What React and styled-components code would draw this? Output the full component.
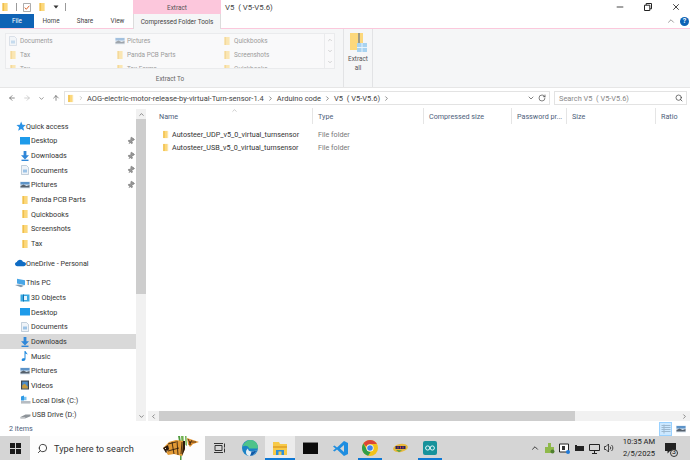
import React from 'react'
import styled, { createGlobalStyle } from 'styled-components'
import { ChevronDown, ChevronUp, ChevronLeft, ChevronRight, ArrowLeft, ArrowRight, ArrowUp, RotateCw, Search, Minus, X, Pin } from 'lucide-react'

const Global = createGlobalStyle`
  html, body { margin: 0; padding: 0; width: 690px; height: 460px; overflow: hidden; background: #fff; }
  body { font-family: Roboto, "Open Sans", sans-serif; font-size: 7.2px; color: #333; }
  * { box-sizing: border-box; }
`

const Page = styled.div`
  width: 690px;
  height: 460px;
  display: flex;
  flex-direction: column;
  overflow: hidden;
`

/* title bar */
const TitleBar = styled.div`
  height: 14px;
  display: flex;
  align-items: center;
`
const QuickTools = styled.div`
  width: 133px;
  display: flex;
  align-items: center;
  gap: 6px;
  padding-left: 0;
`
const Sep = styled.span`
  width: 1px;
  height: 8px;
  background: #9a9a9a;
`
const ExtractTab = styled.div`
  width: 88px;
  height: 14px;
  background: #fcc7dc;
  color: #555;
  font-size: 6.4px;
  display: flex;
  align-items: center;
  justify-content: center;
  padding-top: 1px;
`
const WindowTitle = styled.div`
  flex: 1;
  padding-left: 4px;
  padding-top: 1px;
  font-size: 7.8px;
  color: #444;
  white-space: pre;
`
const WinControls = styled.div`
  display: flex;
  align-items: center;
  gap: 19px;
  padding-right: 9px;
  color: #222;
`

/* tabs */
const TabRow = styled.div`
  height: 15px;
  display: flex;
  align-items: flex-start;
  border-bottom: 1px solid #fbc8dc;
  font-size: 6.4px;
`
const FileTab = styled.div`
  width: 34px;
  height: 14px;
  background: #0f63b5;
  color: #fff;
  display: flex;
  align-items: center;
  justify-content: center;
`
const Tab = styled.div`
  height: 14px;
  width: ${p => p.$w}px;
  display: flex;
  align-items: center;
  justify-content: center;
  color: #444;
  white-space: nowrap;
`
const ActiveTab = styled(Tab)`
  height: 15px;
  background: #f5f6f7;
  border: 1px solid #dcdcdc;
  border-top: none;
  border-bottom: none;
`
const TabSpacer = styled.div`
  flex: 1;
`
const HelpArea = styled.div`
  display: flex;
  align-items: center;
  gap: 4px;
  padding-right: 1px;
  height: 14px;
`
const HelpDot = styled.span`
  width: 9px;
  height: 9px;
  border-radius: 50%;
  background: #0f63b5;
  color: #fff;
  font-size: 7px;
  font-weight: 700;
  display: flex;
  align-items: center;
  justify-content: center;
`

/* ribbon */
const Ribbon = styled.div`
  height: 59px;
  background: #f5f6f7;
  border-bottom: 1px solid #e6e6e6;
  display: flex;
  font-size: 6.4px;
`
const ExtractGroup = styled.div`
  width: 344px;
  border-right: 1px solid #e2e3e5;
  padding: 4px 0 0 5px;
  display: flex;
  flex-direction: column;
`
const GalleryWrap = styled.div`
  width: 330px;
  height: 36px;
  display: flex;
`
const Gallery = styled.div`
  width: 320px;
  height: 36px;
  background: #f9f9fa;
  border: 1px solid #eaebed;
  overflow: hidden;
  display: grid;
  grid-template-columns: 107px 107px 1fr;
  grid-auto-rows: 14px;
  padding: 0 0 0 2px;
`
const GalleryItem = styled.div`
  display: flex;
  align-items: center;
  gap: 2px;
  color: #9b9b9b;
  svg { opacity: 0.55; }
`
const GalleryScroll = styled.div`
  width: 10px;
  background: #f9f9fa;
  border: 1px solid #eaebed;
  border-left: none;
  display: flex;
  flex-direction: column;
  align-items: center;
  justify-content: space-between;
  padding: 3px 0;
  color: #aaa;
`
const GroupLabel = styled.div`
  text-align: center;
  color: #666;
  margin-top: 6px;
  width: 330px;
`
const ExtractAll = styled.div`
  width: 29px;
  border-right: 1px solid #e2e3e5;
  padding-top: 4px;
  display: flex;
  flex-direction: column;
  align-items: center;
  line-height: 9px;
  color: #555;
  text-align: center;
  svg { margin-bottom: 3px; }
`

/* address bar */
const AddressRow = styled.div`
  height: 19px;
  display: flex;
  align-items: flex-start;
  padding: 3px 3px 0 0;
`
const NavButtons = styled.div`
  width: 64px;
  height: 14px;
  display: flex;
  align-items: center;
  gap: 7px;
  padding-left: 8px;
  color: #555;
`
const AddressBox = styled.div`
  width: 486px;
  height: 14px;
  border: 1px solid #e3e3e3;
  display: flex;
  align-items: center;
  padding: 0 3px 0 1px;
  color: #444;
  gap: 3px;
  font-size: 7.5px;
`
const Crumb = styled.span`
  white-space: pre;
`
const CrumbSpacer = styled.div`
  flex: 1;
`
const SearchBox = styled.div`
  width: 133px;
  height: 14px;
  margin-left: 4px;
  border: 1px solid #e3e3e3;
  display: flex;
  align-items: center;
  justify-content: space-between;
  padding: 0 3px 0 4px;
  color: #888;
  font-size: 7.4px;
  white-space: pre;
`

/* body */
const Body = styled.div`
  flex: 1;
  min-height: 0;
  display: flex;
`
const Sidebar = styled.div`
  width: 136px;
  padding-top: 12px;
  display: flex;
  flex-direction: column;
  overflow: hidden;
`
const NavRow = styled.div`
  height: 14.67px;
  flex: none;
  display: flex;
  align-items: center;
  gap: ${p => (p.$top ? 0 : 1)}px;
  padding-left: ${p => (p.$top ? 15 : 20)}px;
  padding-right: 1px;
  margin-top: ${p => p.$gap || 0}px;
  background: ${p => (p.$selected ? '#d9d9d9' : 'transparent')};
  color: #333;
  white-space: nowrap;
`
const NavLabel = styled.span`
  flex: 1;
`
const NavPin = styled(Pin)`
  color: #777;
  fill: #999;
  transform: rotate(35deg);
`
const VScroll = styled.div`
  width: 10px;
  margin-top: 2px;
  background: #f1f1f1;
  display: flex;
  flex-direction: column;
  align-items: center;
  color: #444;
`
const VArrow = styled.div`
  height: 10px;
  width: 100%;
  display: flex;
  align-items: center;
  justify-content: center;
`
const VThumb = styled.div`
  width: 100%;
  height: 175px;
  background: #cdcdcd;
`
const VTrack = styled.div`
  flex: 1;
`
const Main = styled.div`
  flex: 1;
  min-width: 0;
  display: flex;
  flex-direction: column;
`
const Columns = styled.div`
  display: grid;
  grid-template-columns: 167px 111px 88px 55px 89px 34px;
  height: 20px;
  padding-top: 1px;
`
const ColHead = styled.div`
  height: 16px;
  padding-left: ${p => (p.$first ? 13 : 5)}px;
  display: flex;
  align-items: center;
  color: #4c607a;
  border-right: ${p => (p.$last ? 'none' : '1px solid #e5e5e5')};
  white-space: nowrap;
  overflow: hidden;
  position: relative;
`
const SortMark = styled(ChevronUp)`
  position: absolute;
  left: 85px;
  top: -1px;
  color: #aaa;
`
const Files = styled.div`
  flex: 1;
  display: flex;
  flex-direction: column;
  padding-top: 1px;
`
const FileRow = styled.div`
  height: 13px;
  display: grid;
  grid-template-columns: 167px 1fr;
  align-items: center;
`
const FileName = styled.div`
  display: flex;
  align-items: center;
  gap: 2px;
  padding-left: 15px;
  color: #333;
  white-space: nowrap;
`
const FileType = styled.div`
  padding-left: 5px;
  color: #777;
`
const HScroll = styled.div`
  height: 10px;
  margin-left: 2px;
  background: #f1f1f1;
  display: flex;
  align-items: center;
  color: #444;
`
const HThumb = styled.div`
  width: 416px;
  height: 10px;
  background: #cdcdcd;
`
const HTrack = styled.div`
  flex: 1;
`
const HArrow = styled.div`
  width: 11px;
  display: flex;
  justify-content: center;
`

/* status */
const StatusBar = styled.div`
  height: 15px;
  display: flex;
  align-items: center;
  justify-content: space-between;
  padding: 0 3px 0 9px;
  color: #4c607a;
`
const ViewButtons = styled.div`
  display: flex;
  align-items: center;
  gap: 2px;
`
const ViewBtn = styled.div`
  width: 13px;
  height: 14px;
  display: flex;
  align-items: center;
  justify-content: center;
  background: ${p => (p.$on ? '#cce8ff' : 'transparent')};
  border: 1px solid ${p => (p.$on ? '#99d1ff' : 'transparent')};
`

/* taskbar */
const Taskbar = styled.div`
  height: 24px;
  background: #d5d5d5;
  display: flex;
  align-items: stretch;
`
const StartBtn = styled.div`
  width: 30px;
  display: flex;
  align-items: center;
  justify-content: center;
`
const SearchField = styled.div`
  width: 175px;
  background: #fdfdfd;
  display: flex;
  align-items: center;
  gap: 6px;
  padding-left: 7px;
  font-size: 9.2px;
  color: #333;
  position: relative;
`
const Butterflies = styled.svg`
  position: absolute;
  left: 133px;
  top: 0;
`
const MirrorSearch = styled(Search)`
  transform: scaleX(-1);
`
const AppSlots = styled.div`
  width: 240px;
  display: flex;
`
const AppSlot = styled.div`
  width: 30px;
  display: flex;
  align-items: center;
  justify-content: center;
  position: relative;
  background: ${p => (p.$active ? '#ebebeb' : 'transparent')};
  &::after {
    content: '';
    position: absolute;
    bottom: 0;
    left: ${p => (p.$active ? 0 : 3)}px;
    right: ${p => (p.$active ? 0 : 3)}px;
    height: 2px;
    background: ${p => (p.$running || p.$active ? '#0f78d4' : 'transparent')};
  }
`
const Tray = styled.div`
  flex: 1;
  display: flex;
  align-items: center;
  justify-content: flex-end;
  gap: 4px;
  padding-right: 7px;
  color: #222;
`
const Clock = styled.div`
  width: 44px;
  text-align: center;
  line-height: 12px;
  color: #222;
  font-size: 7.6px;
  margin-left: -1px;
`
const NoteBtn = styled.div`
  width: 24px;
  margin-left: -6px;
  display: flex;
  justify-content: center;
  align-items: center;
  font-size: 7px;
  position: relative;
`
const NoteCount = styled.span`
  position: absolute;
  left: 11px;
  top: 6px;
  width: 8px;
  height: 8px;
  border-radius: 50%;
  border: 1px solid #333;
  background: #d5d5d5;
  display: flex;
  align-items: center;
  justify-content: center;
  line-height: 1;
`

/* drawn icons */
const FolderIcon = ({ s = 9 }) => (
  <svg width={s} height={s} viewBox="0 0 10 10">
    <path d="M2.500 1h5v8h-5z" fill="#fcd87c" />
    <path d="M2.500 1h1.600v8H2.500z" fill="#f0c04e" />
    <path d="M7 1h1v8H7z" fill="#fbe7ae" />
  </svg>
)
const NavFolder = () => <FolderIcon s={10} />
const DocIcon = ({ s = 10 }) => (
  <svg width={s} height={s} viewBox="0 0 10 10">
    <path d="M1.500 .5h5l2 2v7h-7z" fill="#eef3f8" stroke="#9fb2c6" strokeWidth=".6" />
    <path d="M3 4.500h4v3H3z" fill="#9cc3e6" />
  </svg>
)
const PicIcon = ({ s = 10 }) => (
  <svg width={s} height={s} viewBox="0 0 10 10">
    <path d="M0 1.500h10v7H0z" fill="#dbe7f2" />
    <path d="M.5 2h9v2.500H.5z" fill="#5c93c8" />
    <path d="M.5 6l3-1.500 3 1.500 3-1v2.600h-9z" fill="#55606c" />
  </svg>
)
const DesktopIcon = () => (
  <svg width="10" height="10" viewBox="0 0 10 10">
    <path d="M0 1h10v7.500H0z" fill="#1e9bea" />
  </svg>
)
const DownloadIcon = () => (
  <svg width="10" height="10" viewBox="0 0 10 10">
    <path d="M3.600 0h2.800v4.200H9L5 8.400 1 4.200h2.600z" fill="#2f87d8" />
    <path d="M1.500 8.600h7V10h-7z" fill="#2f87d8" />
  </svg>
)
const StarIcon = () => (
  <svg width="11" height="11" viewBox="0 0 10 10">
    <path d="M5.600.4l1.200 3.100 3 .2-2.300 2 .8 3.200L5.600 7.200 2.900 8.900l.8-3.200-2.400-2 3.100-.2z" fill="#2b93e6" />
  </svg>
)
const CloudIcon = () => (
  <svg width="11" height="10" viewBox="0 0 11 10">
    <path d="M2.400 8.200C.9 8.200 0 7.300 0 6.100c0-1.100.8-1.900 1.900-2C2.300 2.700 3.500 1.800 5 1.800c1.400 0 2.500.8 2.900 2 1.700 0 3.100.9 3.100 2.300 0 1.200-1 2.100-2.400 2.100z" fill="#0f6cc4" />
  </svg>
)
const PcIcon = () => (
  <svg width="11" height="10" viewBox="0 0 11 10">
    <path d="M2 .8l8 1.400v5L2 5.600z" fill="#49a6e6" />
    <path d="M0 7l4-.6 5 1.400-3 1.400z" fill="#7f98ad" />
  </svg>
)
const CubeIcon = () => (
  <svg width="10" height="10" viewBox="0 0 10 10">
    <path d="M.5 1.500h9v7h-9z" fill="#39a8e0" />
    <path d="M3 3h4v4H3z" fill="#e6f3fb" />
    <path d="M3 1.500h1v7H3z" fill="#0e6fae" />
  </svg>
)
const MusicIcon = () => (
  <svg width="10" height="10" viewBox="0 0 10 10">
    <path d="M4.500 0h1c.3 1.600 2 2 2.200 3.800-.7-.8-1.400-1-2.200-1.200v5.400c0 1.100-1 2-2.200 2S1.500 9.400 1.700 8.400C2 7.300 3.400 7 4.500 7.300z" fill="#1f8ae0" />
  </svg>
)
const VideoIcon = () => (
  <svg width="10" height="10" viewBox="0 0 10 10">
    <path d="M1 .5h8v9H1z" fill="#3c4650" />
    <path d="M2.200 1.600h5.600v6.800H2.200z" fill="#4f8fc8" />
    <path d="M2.200 5.500l2.500-1.800 3.100 3v1.700H2.200z" fill="#c79a3c" />
  </svg>
)
const DiskIcon = () => (
  <svg width="11" height="10" viewBox="0 0 11 10">
    <path d="M1 6h9.500v2.600H1z" fill="#b6bcc2" />
    <path d="M1 1.500l3-1v5H1z" fill="#2f9ae6" />
    <path d="M4 1.800h2.500v3.400H4z" fill="#7cc3ef" />
  </svg>
)
const UsbIcon = () => (
  <svg width="11" height="10" viewBox="0 0 11 10">
    <path d="M.5 7l5-2.400h5v1.600L5 8.400H.5z" fill="#8e9499" />
    <path d="M.5 7.400h4.800v1H.5z" fill="#e2e4e6" />
  </svg>
)
const ZipIcon = () => (
  <svg width="17" height="19" viewBox="0 0 17 19">
    <path d="M0 0h13v17H0z" fill="#fcd87c" />
    <path d="M8 0h2v11H8z" fill="#9e9a84" />
    <path d="M7 10h10v9H7z" fill="#a8d3f0" />
    <path d="M11.500 10h1v9h-1zM7 14h10v1H7z" fill="#e8f4fc" />
  </svg>
)
const QuickCheck = () => (
  <svg width="8" height="9" viewBox="0 0 8 9">
    <path d="M.5.5h7v8h-7z" fill="#fff" stroke="#8a8a8a" strokeWidth=".7" />
    <path d="M1.800 4.600l1.500 1.700 3-3.500" fill="none" stroke="#d9622b" strokeWidth="1" />
  </svg>
)
const Caret = () => (
  <svg width="6" height="6" viewBox="0 0 6 6">
    <path d="M.5 1.500h5L3 4.500z" fill="#333" />
  </svg>
)
const RestoreIcon = () => (
  <svg width="8" height="8" viewBox="0 0 8 8">
    <path d="M.5 2.200h5.300v5.300H.5z M2.200 2V.5h5.300v5.300H6" fill="none" stroke="#222" strokeWidth="1" />
  </svg>
)
const WinLogo = () => (
  <svg width="11" height="11" viewBox="0 0 11 11">
    <path d="M0 0h5v5H0zM6 0h5v5H6zM0 6h5v5H0zM6 6h5v5H6z" fill="#1a1a1a" />
  </svg>
)
const TaskView = () => (
  <svg width="12" height="10" viewBox="0 0 12 10" fill="none" stroke="#333">
    <path d="M1 2.500h7v5H1z" />
    <path d="M0 .5h9M0 9.500h9M10.500 .5v4M10.500 5.500v4" />
  </svg>
)
const EdgeIcon = () => (
  <svg width="16" height="16" viewBox="0 0 16 16">
    <circle cx="8" cy="8" r="8" fill="#1b82c6" />
    <path d="M2 3.500C4 1 6.500 0 8.500 0c4 0 7.500 3 7.500 8.500H7C6.800 6 3.500 5 .6 6.500 .8 5.500 1.300 4.500 2 3.500z" fill="#4fc38a" />
    <path d="M6 8.500c0 1.800 1.400 3 3.500 3 2 0 3.600-.5 5-1.500C13.300 14 10.500 16 8 16c-2.500 0-4-1.500-4-3.800 0-1.500.8-3 2-3.700z" fill="#e4edf2" />
    <path d="M8 16c2.500 0 5.300-2 6.500-6-1.400 1-3 1.500-5 1.500-.5 2-.8 3.300-1.500 4.500z" fill="#0f5aa8" />
  </svg>
)
const ExplorerIcon = () => (
  <svg width="14" height="13" viewBox="0 0 14 13">
    <path d="M0 0h6l1 2h7v11H0z" fill="#f7c948" />
    <path d="M0 4h14v2H0z" fill="#e5a92e" />
    <path d="M3 8h8v5H3z" fill="#2c8fd8" />
    <path d="M5.500 9.500h3V13h-3z" fill="#f7c948" />
  </svg>
)
const TerminalIcon = () => (
  <svg width="15" height="12" viewBox="0 0 15 12">
    <path d="M0 0h15v12H0z" fill="#0b0b0b" />
    <path d="M0 0h15v1H0z" fill="#777" />
  </svg>
)
const VsCodeIcon = () => (
  <svg width="15" height="15" viewBox="0 0 15 15">
    <path d="M11 0l4 2v11l-4 2-7-6.500L1.500 10.500 0 9.500 2.600 7.500 0 5.500l1.500-1L4 6.500zM11 4L7 7.500l4 3.500z" fill="#1f8ee0" />
  </svg>
)
const ChromeIcon = () => (
  <svg width="16" height="16" viewBox="0 0 16 16">
    <circle cx="8" cy="8" r="8" fill="#f2c21b" />
    <path d="M8 0a8 8 0 0 1 6.900 4H8a4 4 0 0 0-3.700 2.400L1.400 3.500A8 8 0 0 1 8 0z" fill="#dc4438" />
    <path d="M1.400 3.500L5 10a4 4 0 0 0 3.500 2l-2.300 3.800A8 8 0 0 1 1.400 3.500z" fill="#2f9e4a" />
    <circle cx="8" cy="8" r="3.600" fill="#fff" />
    <circle cx="8" cy="8" r="2.800" fill="#3d84ee" />
  </svg>
)
const AmdIcon = () => (
  <svg width="15" height="10" viewBox="0 0 15 10">
    <ellipse cx="7.500" cy="5" rx="7.500" ry="4" fill="#e9b93c" transform="rotate(-10 7.500 5)" />
    <path d="M2.500 3h10v3h-10z" fill="#23265f" />
    <path d="M4.500 3.500h1v2h-1zM7 3.500h1v2H7zM9.500 3.500h1v2h-1z" fill="#ea4a3c" />
    <path d="M3 7l6 .5-3 1.500z" fill="#3f9d46" />
  </svg>
)
const ArduinoIcon = () => (
  <svg width="14" height="14" viewBox="0 0 14 14">
    <rect width="14" height="14" rx="2" fill="#17929b" />
    <circle cx="4.700" cy="7" r="2.100" fill="none" stroke="#e8fbfb" strokeWidth="1" />
    <circle cx="9.300" cy="7" r="2.100" fill="none" stroke="#e8fbfb" strokeWidth="1" />
  </svg>
)
const ButterflyArt = () => (
  <Butterflies width="38" height="24" viewBox="0 0 38 24">
    <path d="M15 0c1.500 6 2.500 14 2 24h1.500c.5-9-.5-18-1.500-24z" fill="#4f9a3e" />
    <path d="M18 0l1 13 2-1-.5-12zM22 0l.5 9 1.500 1-.5-10z" fill="#6fb04f" />
    <path d="M0 12l6-6 7-2 8 1 1 8-3 7-8-2-6 1-2-3z" fill="#e39a35" />
    <path d="M5 8l8-2M9 6l2 12M14 5l1 14M5 15l11-3M19 6l-1 12" stroke="#23150c" strokeWidth=".8" fill="none" />
    <path d="M0 12l5-3 1 4-3 4zM20 5h2l0 8-3 7z" fill="#2a1a10" />
    <path d="M2 12.500h1M3.500 15h1" stroke="#f5e9c8" strokeWidth="1" />
    <path d="M24 2l6 2 6 2-6 2-3 3-2-3z" fill="#e0912f" />
    <path d="M25 3l3 6M29 4l-3 5M33 6h-7" stroke="#23150c" strokeWidth=".7" fill="none" />
  </Butterflies>
)
const TrayCloud = () => (
  <svg width="11" height="11" viewBox="0 0 11 11">
    <path d="M4 0h3v4h3v6H1V4h3z" fill="#8fb94b" />
    <circle cx="8.500" cy="8.500" r="2" fill="#4f7f2e" />
  </svg>
)
const TrayMonitor = () => (
  <svg width="11" height="11" viewBox="0 0 11 11">
    <path d="M.5 1h9v8h-9z" fill="#fff" stroke="#222" />
    <path d="M3 3h3v4H3z" fill="#333" />
    <circle cx="9" cy="9" r="2" fill="#1f7ad8" />
  </svg>
)
const TrayBattery = () => (
  <svg width="11" height="9" viewBox="0 0 11 9">
    <path d="M1 2h9v5H1z" fill="#222" />
    <path d="M1 1h2v1H1z" fill="#222" />
  </svg>
)
const TrayNetwork = () => (
  <svg width="11" height="11" viewBox="0 0 11 11" fill="none" stroke="#222">
    <path d="M.5 1.500h10v6H.5zM5.500 7.500v2.500M3 10.500h5" />
  </svg>
)
const TraySound = () => (
  <svg width="10" height="10" viewBox="0 0 10 10" fill="none" stroke="#222" strokeWidth=".8">
    <path d="M.5 3.500h1.500L4.500 1v8L2 6.500H.5z" />
    <path d="M6 3.500a2 2 0 0 1 0 3M7.500 2a4 4 0 0 1 0 6" />
  </svg>
)
const NoteIcon = () => (
  <svg width="12" height="11" viewBox="0 0 12 11">
    <path d="M0 0h11v8H5L2.500 10.500V8H0z" fill="#222" />
  </svg>
)
const DetailsView = () => (
  <svg width="10" height="10" viewBox="0 0 10 10" fill="none" stroke="#9db8cf">
    <path d="M.5 1.500h9M.5 3.500h9M.5 5.500h9M.5 7.500h9M3 .5v9" />
  </svg>
)

const gallery = [
  [DocIcon, 'Documents'], [PicIcon, 'Pictures'], [NavFolder, 'Quickbooks'],
  [NavFolder, 'Tax'], [NavFolder, 'Panda PCB Parts'], [NavFolder, 'Screenshots'],
  [NavFolder, 'Tax'], [NavFolder, 'Tax Forms'], [NavFolder, 'Quickbooks'],
]

const nav = [
  { Icon: StarIcon, label: 'Quick access', top: true },
  { Icon: DesktopIcon, label: 'Desktop', pin: true },
  { Icon: DownloadIcon, label: 'Downloads', pin: true },
  { Icon: DocIcon, label: 'Documents', pin: true },
  { Icon: PicIcon, label: 'Pictures', pin: true },
  { Icon: NavFolder, label: 'Panda PCB Parts' },
  { Icon: NavFolder, label: 'Quickbooks' },
  { Icon: NavFolder, label: 'Screenshots' },
  { Icon: NavFolder, label: 'Tax' },
  { Icon: CloudIcon, label: 'OneDrive - Personal', top: true, gap: 5 },
  { Icon: PcIcon, label: 'This PC', top: true, gap: 5 },
  { Icon: CubeIcon, label: '3D Objects' },
  { Icon: DesktopIcon, label: 'Desktop' },
  { Icon: DocIcon, label: 'Documents' },
  { Icon: DownloadIcon, label: 'Downloads', selected: true },
  { Icon: MusicIcon, label: 'Music' },
  { Icon: PicIcon, label: 'Pictures' },
  { Icon: VideoIcon, label: 'Videos' },
  { Icon: DiskIcon, label: 'Local Disk (C:)' },
  { Icon: UsbIcon, label: 'USB Drive (D:)' },
]

const columns = ['Name', 'Type', 'Compressed size', 'Password pr...', 'Size', 'Ratio']
const files = ['Autosteer_UDP_v5_0_virtual_turnsensor', 'Autosteer_USB_v5_0_virtual_turnsensor']
const crumbs = ['AOG-electric-motor-release-by-virtual-Turn-sensor-1.4', 'Arduino code', 'V5  ( V5-V5.6)']

export default function App() {
  return (
    <Page>
      <Global />
      <TitleBar>
        <QuickTools>
          <FolderIcon s={10} />
          <Sep />
          <QuickCheck />
          <FolderIcon s={10} />
          <Caret />
          <Sep />
        </QuickTools>
        <ExtractTab>Extract</ExtractTab>
        <WindowTitle>V5  ( V5-V5.6)</WindowTitle>
        <WinControls>
          <Minus size={10} />
          <RestoreIcon />
          <X size={10} />
        </WinControls>
      </TitleBar>

      <TabRow>
        <FileTab>File</FileTab>
        <Tab $w={34}>Home</Tab>
        <Tab $w={34}>Share</Tab>
        <Tab $w={31}>View</Tab>
        <ActiveTab $w={88}>Compressed Folder Tools</ActiveTab>
        <TabSpacer />
        <HelpArea>
          <ChevronUp size={10} color="#888" />
          <HelpDot>?</HelpDot>
        </HelpArea>
      </TabRow>

      <Ribbon>
        <ExtractGroup>
          <GalleryWrap>
            <Gallery>
              {gallery.map(([Icon, label], i) => (
                <GalleryItem key={i}><Icon /><span>{label}</span></GalleryItem>
              ))}
            </Gallery>
            <GalleryScroll>
              <ChevronUp size={6} />
              <ChevronDown size={6} />
              <ChevronDown size={6} />
            </GalleryScroll>
          </GalleryWrap>
          <GroupLabel>Extract To</GroupLabel>
        </ExtractGroup>
        <ExtractAll>
          <ZipIcon />
          <span>Extract</span>
          <span>all</span>
        </ExtractAll>
      </Ribbon>

      <AddressRow>
        <NavButtons>
          <ArrowLeft size={8} />
          <ArrowRight size={8} color="#bbb" />
          <ChevronDown size={7} />
          <ArrowUp size={8} />
        </NavButtons>
        <AddressBox>
          <FolderIcon s={9} />
          <ChevronRight size={6} color="#999" />
          {crumbs.map(c => (
            <React.Fragment key={c}>
              <Crumb>{c}</Crumb>
              <ChevronRight size={7} />
            </React.Fragment>
          ))}
          <CrumbSpacer />
          <ChevronDown size={8} />
          <RotateCw size={8} />
        </AddressBox>
        <SearchBox>
          <span>Search V5  ( V5-V5.6)</span>
          <Search size={8} color="#333" />
        </SearchBox>
      </AddressRow>

      <Body>
        <Sidebar>
          {nav.map((n, i) => (
            <NavRow key={i} $top={n.top} $gap={n.gap} $selected={n.selected}>
              <n.Icon />
              <NavLabel>{n.label}</NavLabel>
              {n.pin && <NavPin size={8} />}
            </NavRow>
          ))}
        </Sidebar>
        <VScroll>
          <VArrow><ChevronUp size={7} /></VArrow>
          <VThumb />
          <VTrack />
          <VArrow><ChevronDown size={7} /></VArrow>
        </VScroll>
        <Main>
          <Columns>
            {columns.map((c, i) => (
              <ColHead key={c} $first={i === 0} $last={i === columns.length - 1}>
                {i === 0 && <SortMark size={7} />}
                {c}
              </ColHead>
            ))}
          </Columns>
          <Files>
            {files.map(f => (
              <FileRow key={f}>
                <FileName><FolderIcon s={9} />{f}</FileName>
                <FileType>File folder</FileType>
              </FileRow>
            ))}
          </Files>
          <HScroll>
            <HArrow><ChevronLeft size={7} /></HArrow>
            <HThumb />
            <HTrack />
            <HArrow><ChevronRight size={7} /></HArrow>
          </HScroll>
        </Main>
      </Body>

      <StatusBar>
        <span>2 items</span>
        <ViewButtons>
          <ViewBtn $on><DetailsView /></ViewBtn>
          <ViewBtn><PicIcon /></ViewBtn>
        </ViewButtons>
      </StatusBar>

      <Taskbar>
        <StartBtn><WinLogo /></StartBtn>
        <SearchField>
          <MirrorSearch size={11} color="#333" />
          Type here to search
          <ButterflyArt />
        </SearchField>
        <AppSlots>
          <AppSlot><TaskView /></AppSlot>
          <AppSlot><EdgeIcon /></AppSlot>
          <AppSlot $active><ExplorerIcon /></AppSlot>
          <AppSlot><TerminalIcon /></AppSlot>
          <AppSlot><VsCodeIcon /></AppSlot>
          <AppSlot $running><ChromeIcon /></AppSlot>
          <AppSlot><AmdIcon /></AppSlot>
          <AppSlot $running><ArduinoIcon /></AppSlot>
        </AppSlots>
        <Tray>
          <ChevronUp size={10} />
          <TrayCloud />
          <TrayMonitor />
          <TrayBattery />
          <TrayNetwork />
          <TraySound />
          <Clock>10:35 AM<br />2/5/2025</Clock>
          <NoteBtn><NoteIcon /><NoteCount>3</NoteCount></NoteBtn>
        </Tray>
      </Taskbar>
    </Page>
  )
}
